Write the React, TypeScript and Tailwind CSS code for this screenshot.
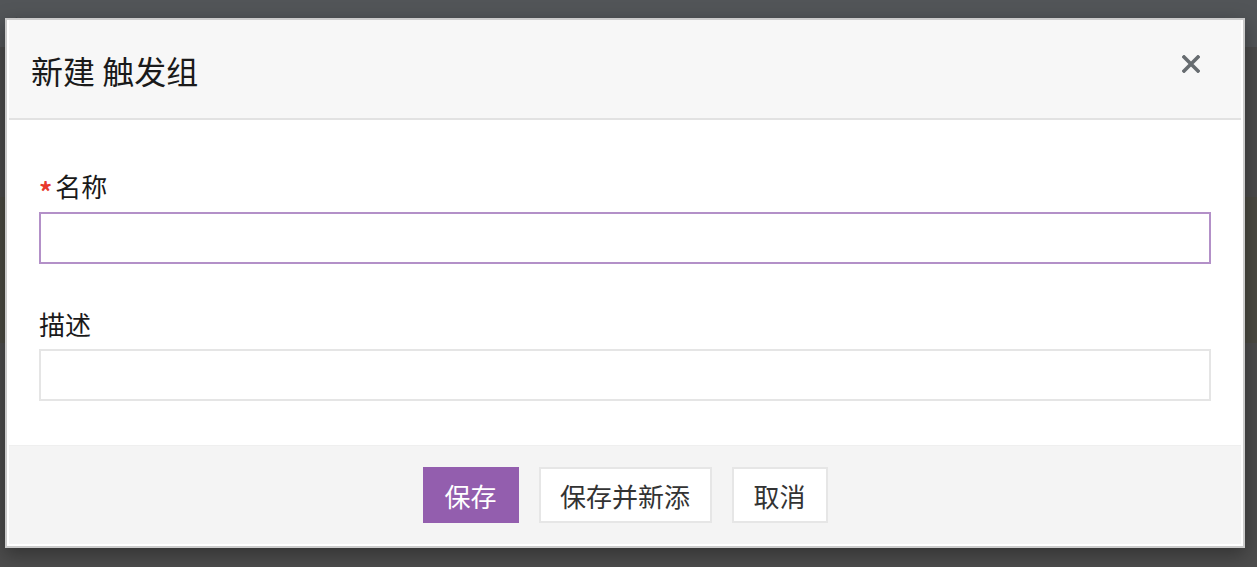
import React from 'react';

const font = { fontFamily: '"Noto Sans CJK SC", "Noto Sans", sans-serif' };

const Backdrop = () => (
    <div className="min-h-[567px] w-full bg-[#4c4c4c] flex flex-col">
        <div className="h-[47px] bg-[#525558] px-2 pt-3 text-[20px] text-[#2b2d2f]">我的 触发 器</div>
        <div className="h-[150px] bg-[#4b4b4b]"></div>
        <div className="h-[146px] bg-[#4b4a42]"></div>
        <div className="flex-1 bg-[#4c4c4c]"></div>
    </div>
);

const Dialog = () => (
    <div className="ml-[5px] mt-[18px] w-[1240px] border-2 border-[#cbcbcb] bg-white px-[2px] pb-[2px] shadow-[0_6px_18px_rgba(0,0,0,0.35)]" style={font}>
        <div className="flex h-[100px] items-start justify-between border-b-2 border-[#e2e2e2] bg-[#f7f7f7] pl-[22px] pr-[41px]">
            <h2 className="mt-[27px] text-[32px] leading-[46px] text-[#1a1a1a]">新建 触发组</h2>
            <button className="mt-[35px] text-[#676c70]">
                <svg width="18" height="18" viewBox="0 0 18 18">
                    <path d="M2 2 L16 16 M16 2 L2 16" stroke="currentColor" strokeWidth="3.6" strokeLinecap="square" />
                </svg>
            </button>
        </div>
        <div className="px-[30px] pt-[48px] pb-[44px]">
            <label className="flex h-[36px] items-center text-[26px] leading-[36px] text-[#1a1a1a]">
                <span className="mr-[3px] mt-[10px] text-[26px] font-bold leading-[26px] text-[#e8392c]">*</span>名称
            </label>
            <input className="mt-[8px] block h-[52px] w-full border-2 border-[#b390c8] bg-white outline-none" />
            <label className="mt-[42px] block h-[36px] text-[26px] leading-[36px] text-[#1a1a1a]">描述</label>
            <input className="mt-[7px] block h-[52px] w-full border-2 border-[#e5e5e5] bg-white outline-none" />
        </div>
        <div className="flex h-[99px] items-center justify-center gap-[20px] border-t border-[#efefef] bg-[#f4f4f4]">
            <button className="h-[56px] w-[96px] bg-[#935eae] text-[26px] text-white">保存</button>
            <button className="h-[56px] w-[173px] border-2 border-[#e6e6e6] bg-white text-[26px] text-[#333]">保存并新添</button>
            <button className="h-[56px] w-[96px] border-2 border-[#e6e6e6] bg-white text-[26px] text-[#333]">取消</button>
        </div>
    </div>
);

const App = () => {
    return (
        <div className="relative h-[567px] w-[1257px] overflow-hidden">
            <Backdrop />
            <div className="absolute inset-0">
                <Dialog />
            </div>
        </div>
    );
};

export default App;
